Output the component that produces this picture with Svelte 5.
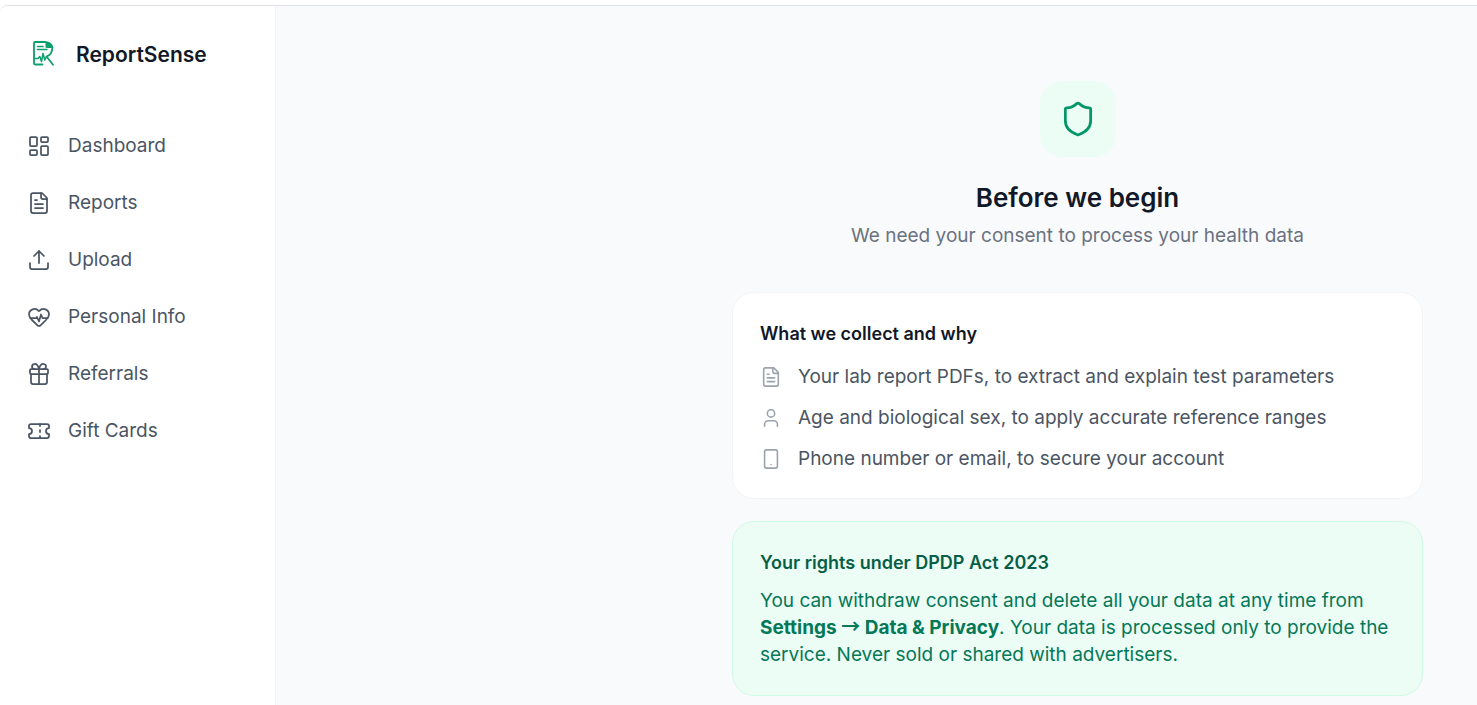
<script>
  const nav = [
    { label: 'Dashboard', icon: 'dashboard' },
    { label: 'Reports', icon: 'file' },
    { label: 'Upload', icon: 'upload' },
    { label: 'Personal Info', icon: 'heart' },
    { label: 'Referrals', icon: 'gift' },
    { label: 'Gift Cards', icon: 'ticket' }
  ];

  const collected = [
    { text: 'Your lab report PDFs, to extract and explain test parameters', icon: 'file' },
    { text: 'Age and biological sex, to apply accurate reference ranges', icon: 'user' },
    { text: 'Phone number or email, to secure your account', icon: 'phone' }
  ];

  // Outline icons on a 24 unit grid
  const icons = {
    dashboard: ['M4 3h5a1 1 0 0 1 1 1v7a1 1 0 0 1-1 1H4a1 1 0 0 1-1-1V4a1 1 0 0 1 1-1z', 'M15 3h5a1 1 0 0 1 1 1v3a1 1 0 0 1-1 1h-5a1 1 0 0 1-1-1V4a1 1 0 0 1 1-1z', 'M15 12h5a1 1 0 0 1 1 1v7a1 1 0 0 1-1 1h-5a1 1 0 0 1-1-1v-7a1 1 0 0 1 1-1z', 'M4 16h5a1 1 0 0 1 1 1v3a1 1 0 0 1-1 1H4a1 1 0 0 1-1-1v-3a1 1 0 0 1 1-1z'],
    file: ['M15 2H6a2 2 0 0 0-2 2v16a2 2 0 0 0 2 2h12a2 2 0 0 0 2-2V7Z', 'M14 2v4a2 2 0 0 0 2 2h4', 'M10 9H8', 'M16 13H8', 'M16 17H8'],
    upload: ['M21 15v4a2 2 0 0 1-2 2H5a2 2 0 0 1-2-2v-4', 'm17 8-5-5-5 5', 'M12 3v12'],
    heart: ['M2 9.5a5.5 5.5 0 0 1 9.591-3.676.56.56 0 0 0 .818 0A5.49 5.49 0 0 1 22 9.5c0 2.29-1.5 4-3 5.5l-5.492 5.313a2 2 0 0 1-3 .019L5 15c-1.5-1.5-3-3.2-3-5.5', 'M3.22 13H9.5l.5-1 2 4.5 2-7 1.5 3.5h5.27'],
    gift: ['M4 7h16a1 1 0 0 1 1 1v3a1 1 0 0 1-1 1H4a1 1 0 0 1-1-1V8a1 1 0 0 1 1-1z', 'M12 7v15', 'M20 12v8a2 2 0 0 1-2 2H6a2 2 0 0 1-2-2v-8', 'M7.5 7a2.5 2.5 0 0 1 0-5A4.8 8 0 0 1 12 7a4.8 8 0 0 1 4.5-5 2.5 2.5 0 0 1 0 5'],
    ticket: ['M2 9a3 3 0 0 1 0 6v2a2 2 0 0 0 2 2h16a2 2 0 0 0 2-2v-2a3 3 0 0 1 0-6V7a2 2 0 0 0-2-2H4a2 2 0 0 0-2 2Z', 'M13 5v2', 'M13 17v2', 'M13 11v2'],
    user: ['M19 21v-2a4 4 0 0 0-4-4H9a4 4 0 0 0-4 4v2', 'M16 7a4 4 0 1 1-8 0 4 4 0 0 1 8 0z'],
    phone: ['M7 2h10a2 2 0 0 1 2 2v16a2 2 0 0 1-2 2H7a2 2 0 0 1-2-2V4a2 2 0 0 1 2-2z', 'M12 18h.01'],
    shield: ['M20 13c0 5-3.5 7.5-7.66 8.95a1 1 0 0 1-.67-.01C7.5 20.5 4 18 4 13V6a1 1 0 0 1 1-1c2 0 4.5-1.2 6.24-2.72a1.17 1.17 0 0 1 1.52 0C14.51 3.81 17 5 19 5a1 1 0 0 1 1 1z']
  };
</script>

{#snippet icon(name, size)}
  <svg class="icon" width={size} height={size} viewBox="0 0 24 24" aria-hidden="true">
    {#each icons[name] as d}<path {d} />{/each}
  </svg>
{/snippet}

<div class="app">
  <aside>
    <a class="brand" href="#home">
      <svg class="logo" width="24" height="28" viewBox="0 0 24 28" aria-hidden="true">
        <path class="line" d="M14.500 2H4.200Q3 2 3 3.200V23.300Q3 24.500 4.200 24.500H11.500" />
        <path class="fold" d="M14.500 1.200C19 1.200 22.200 4.500 22.200 8H16Q14.500 8 14.500 6.500Z" />
        <path class="line" d="M21.300 7.500C21.300 12.500 18.800 15.500 15.500 16.500L22 24.700" />
        <path class="thin" d="M6.500 6.500H12M6.500 9.500H16" />
        <path class="thin" d="M3.500 18.500H7L8.800 16.500 10.500 21.500 12 13.500 13.800 20 15.500 16.500" />
      </svg>
      <span>ReportSense</span>
    </a>
    <nav aria-label="Main">
      {#each nav as item}
        <a href="#{item.icon}">{@render icon(item.icon, 24)}<span>{item.label}</span></a>
      {/each}
    </nav>
  </aside>

  <main>
    <div class="column">
      <header>
        <div class="badge">{@render icon('shield', 38)}</div>
        <h1>Before we begin</h1>
        <p>We need your consent to process your health data</p>
      </header>

      <section class="card">
        <h2>What we collect and why</h2>
        <ul>
          {#each collected as item}
            <li>{@render icon(item.icon, 22)}<span>{item.text}</span></li>
          {/each}
        </ul>
      </section>

      <section class="card rights">
        <h2>Your rights under DPDP Act 2023</h2>
        <p>
          You can withdraw consent and delete all your data at any time from
          <strong>Settings <span class="arrow">→</span> Data &amp; Privacy</strong>. Your data is processed only to provide the
          service. Never sold or shared with advertisers.
        </p>
      </section>
    </div>
  </main>
</div>

<style>
  :global(body) {
    margin: 0;
    background: #fff;
  }

  .app {
    box-sizing: border-box;
    display: flex;
    min-height: calc(100vh - 5px);
    margin-top: 5px;
    border-top: 1px solid #dfe1e4;
    border-top-left-radius: 8px;
    overflow: hidden;
    background: #f9fafc;
    color: #4b5563;
    font-family: Inter, sans-serif;
    font-size: 19px;
    line-height: 27px;
  }

  .icon {
    flex: none;
    fill: none;
    stroke: currentColor;
    stroke-width: 1.75;
    stroke-linecap: round;
    stroke-linejoin: round;
  }

  aside {
    box-sizing: border-box;
    flex: none;
    width: 276px;
    padding: 33px 13px;
    border-right: 1px solid #f3f4f6;
    background: #fff;
  }

  a {
    color: inherit;
    text-decoration: none;
  }

  .brand {
    display: flex;
    align-items: center;
    gap: 21px;
    padding-left: 18px;
    height: 30px;
    color: #111827;
    font-size: 21px;
    font-weight: 600;
  }

  .logo {
    fill: none;
    stroke: #0b9f6e;
    stroke-linecap: round;
    stroke-linejoin: round;
  }

  .line {
    stroke-width: 1.8;
  }

  .thin {
    stroke-width: 1.5;
  }

  .fold {
    fill: #0b9f6e;
    stroke: none;
  }

  nav {
    display: flex;
    flex-direction: column;
    gap: 14px;
    margin-top: 55px;
  }

  nav a {
    display: flex;
    align-items: center;
    gap: 17px;
    padding: 8px 14px;
  }

  main {
    flex: 1;
    display: flex;
    justify-content: flex-end;
    padding: 75px 54px 9px;
  }

  .column {
    width: 100%;
    max-width: 691px;
  }

  header {
    display: flex;
    flex-direction: column;
    align-items: center;
    margin-bottom: 43px;
    color: #6b7280;
    text-align: center;
  }

  .badge {
    display: grid;
    place-items: center;
    width: 76px;
    height: 76px;
    border-radius: 22px;
    background: #ecfdf5;
    color: #059669;
  }

  h1,
  h2,
  p,
  ul {
    margin: 0;
  }

  h1 {
    margin: 23px 0 6px;
    color: #111827;
    font-size: 26px;
    font-weight: 600;
    line-height: 36px;
  }

  h2 {
    color: #111827;
    font-size: 18px;
    font-weight: 600;
    line-height: 27px;
  }

  .card {
    padding: 27px 27px 26px;
    border: 1px solid #f3f4f6;
    border-radius: 22px;
    background: #fff;
  }

  ul {
    display: flex;
    flex-direction: column;
    gap: 14px;
    margin-top: 16px;
    padding: 0;
    list-style: none;
  }

  li {
    display: flex;
    align-items: center;
    gap: 16px;
  }

  li .icon {
    color: #9ca3af;
  }

  .rights {
    margin-top: 22px;
    padding-bottom: 27px;
    border-color: #d1fae5;
    background: #ecfdf5;
    color: #047857;
  }

  .rights h2 {
    margin-bottom: 11px;
    color: #065f46;
  }

  strong {
    font-weight: 700;
  }

  .arrow {
    font-family: "Noto Sans CJK JP", sans-serif;
    line-height: 1;
  }
</style>
